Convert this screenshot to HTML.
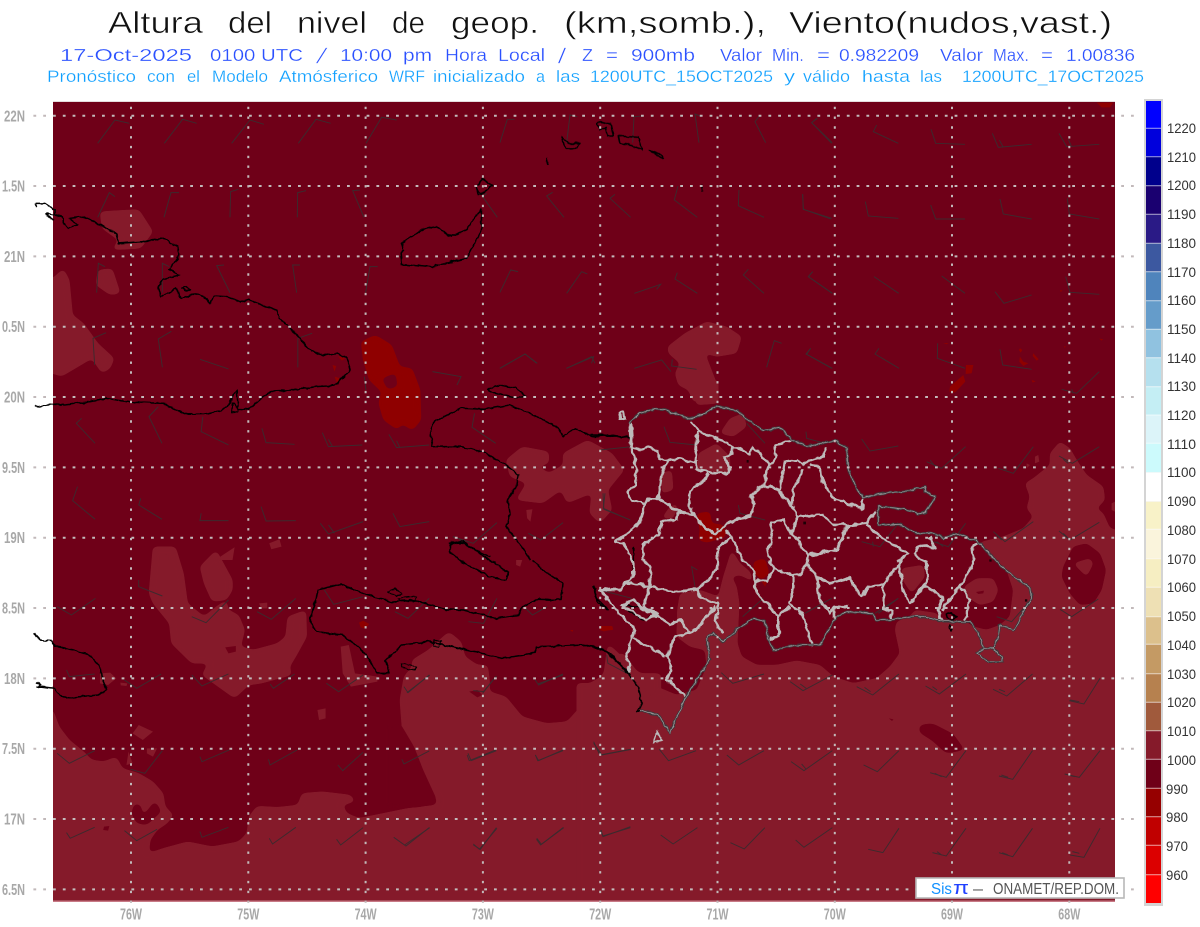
<!DOCTYPE html>
<html><head><meta charset="utf-8"><title>Altura del nivel de geop.</title>
<style>
html,body{margin:0;padding:0;background:#fff}
svg{display:block}
svg path,svg polygon,svg line{vector-effect:non-scaling-stroke}
text{font-family:"Liberation Sans",sans-serif}
.t text{font-size:31px;fill:#111;stroke:#fff;stroke-width:.55px}
.l2 text{font-size:17.5px;fill:#2a50ff;stroke:#fff;stroke-width:.25px}
.l3 text{font-size:16.5px;fill:#10a0ff;stroke:#fff;stroke-width:.25px}
.ax text{font-size:15.5px;fill:#a8a8a8;font-weight:bold}
.cb text{font-size:13.5px;fill:#333}
.L{fill:#851a2a}.D{fill:#6f0018}.R{fill:#8f0000}
.s{filter:url(#g)}
.c{fill:none;stroke:#000;stroke-width:1.5;stroke-linejoin:round}
.w{fill:none;stroke:#3c2a2e;stroke-width:.95}
</style></head><body>
<svg width="1200" height="927" viewBox="0 0 1200 927" xmlns="http://www.w3.org/2000/svg">
<defs>
<filter id="g" x="-20%" y="-20%" width="140%" height="140%" color-interpolation-filters="sRGB">
<feGaussianBlur in="SourceGraphic" stdDeviation="7"/>
<feColorMatrix type="matrix" values="1 0 0 0 0 0 1 0 0 0 0 0 1 0 0 0 0 0 16 -7"/>
</filter>
<filter id="wig" filterUnits="userSpaceOnUse" x="0" y="0" width="1200" height="927" color-interpolation-filters="sRGB">
<feTurbulence type="fractalNoise" baseFrequency=".13" numOctaves="2" seed="4"/>
<feDisplacementMap in="SourceGraphic" scale="6" xChannelSelector="R" yChannelSelector="G"/>
</filter>
<filter id="wig2" filterUnits="userSpaceOnUse" x="0" y="0" width="1200" height="927" color-interpolation-filters="sRGB">
<feTurbulence type="fractalNoise" baseFrequency=".16" numOctaves="2" seed="9"/>
<feDisplacementMap in="SourceGraphic" scale="3.5" xChannelSelector="R" yChannelSelector="G"/>
</filter>
</defs>
<rect width="1200" height="927" fill="#fff"/>

<g class="t">
<text x="108" y="33" textLength="95" lengthAdjust="spacingAndGlyphs">Altura</text>
<text x="228" y="33" textLength="44" lengthAdjust="spacingAndGlyphs">del</text>
<text x="297" y="33" textLength="70" lengthAdjust="spacingAndGlyphs">nivel</text>
<text x="392" y="33" textLength="33" lengthAdjust="spacingAndGlyphs">de</text>
<text x="451" y="33" textLength="88" lengthAdjust="spacingAndGlyphs">geop.</text>
<text x="564" y="33" textLength="202" lengthAdjust="spacingAndGlyphs">(km,somb.),</text>
<text x="789" y="33" textLength="323" lengthAdjust="spacingAndGlyphs">Viento(nudos,vast.)</text>
</g>
<g class="l2">
<text x="60" y="61" textLength="132" lengthAdjust="spacingAndGlyphs">17-Oct-2025</text>
<text x="210" y="61" textLength="93" lengthAdjust="spacingAndGlyphs">0100 UTC</text>
<text transform="translate(316,63) skewX(-20)" style="font-size:21px">/</text>
<text x="340" y="61" textLength="52" lengthAdjust="spacingAndGlyphs">10:00</text>
<text x="403" y="61" textLength="29" lengthAdjust="spacingAndGlyphs">pm</text>
<text x="445" y="61" textLength="42" lengthAdjust="spacingAndGlyphs">Hora</text>
<text x="498" y="61" textLength="47" lengthAdjust="spacingAndGlyphs">Local</text>
<text transform="translate(558,63) skewX(-8)" style="font-size:21px">/</text>
<text x="582" y="61" textLength="11" lengthAdjust="spacingAndGlyphs">Z</text>
<text x="606" y="61" textLength="12" lengthAdjust="spacingAndGlyphs">=</text>
<text x="631" y="61" textLength="64" lengthAdjust="spacingAndGlyphs">900mb</text>
<text x="720" y="61" textLength="42" lengthAdjust="spacingAndGlyphs">Valor</text>
<text x="772" y="61" textLength="32" lengthAdjust="spacingAndGlyphs">Min.</text>
<text x="817" y="61" textLength="13" lengthAdjust="spacingAndGlyphs">=</text>
<text x="839" y="61" textLength="80" lengthAdjust="spacingAndGlyphs">0.982209</text>
<text x="940" y="61" textLength="43" lengthAdjust="spacingAndGlyphs">Valor</text>
<text x="993" y="61" textLength="36" lengthAdjust="spacingAndGlyphs">Max.</text>
<text x="1041" y="61" textLength="12" lengthAdjust="spacingAndGlyphs">=</text>
<text x="1066" y="61" textLength="69" lengthAdjust="spacingAndGlyphs">1.00836</text>
</g>
<g class="l3">
<text x="47" y="82" textLength="89" lengthAdjust="spacingAndGlyphs">Pronóstico</text>
<text x="147" y="82" textLength="28" lengthAdjust="spacingAndGlyphs">con</text>
<text x="187" y="82" textLength="13" lengthAdjust="spacingAndGlyphs">el</text>
<text x="212" y="82" textLength="56" lengthAdjust="spacingAndGlyphs">Modelo</text>
<text x="279" y="82" textLength="99" lengthAdjust="spacingAndGlyphs">Atmósferico</text>
<text x="389" y="82" textLength="36" lengthAdjust="spacingAndGlyphs" style="font-size:17px">WRF</text>
<text x="433" y="82" textLength="92" lengthAdjust="spacingAndGlyphs">inicializado</text>
<text x="536" y="82" textLength="9" lengthAdjust="spacingAndGlyphs">a</text>
<text x="556" y="82" textLength="24" lengthAdjust="spacingAndGlyphs">las</text>
<text x="590" y="82" textLength="183" lengthAdjust="spacingAndGlyphs">1200UTC_15OCT2025</text>
<text x="784" y="82" textLength="11" lengthAdjust="spacingAndGlyphs">y</text>
<text x="803" y="82" textLength="47" lengthAdjust="spacingAndGlyphs">válido</text>
<text x="862" y="82" textLength="48" lengthAdjust="spacingAndGlyphs">hasta</text>
<text x="920" y="82" textLength="22" lengthAdjust="spacingAndGlyphs">las</text>
<text x="962" y="82" textLength="182" lengthAdjust="spacingAndGlyphs">1200UTC_17OCT2025</text>
</g>

<!-- plot -->
<rect x="53" y="101" width="1062" height="1" fill="#e4dcdc"/>
<rect x="53" y="102" width="1062" height="799" class="D"/>

<svg x="53" y="102" width="1062" height="799" viewBox="53 102 1062 799">
<!-- z6 group: SW -->
<g transform="translate(0,560) scale(.408,.3333)">
<path class="L s" d="M60,450 130,450 145,500 170,540 205,575 225,600 255,605 285,590 300,625 340,640 375,665 400,700 405,740 425,765 410,790 385,810 368,840 365,880 400,865 460,845 520,860 585,845 605,820 610,770 630,738 680,742 730,735 740,700 790,695 860,705 870,725 840,735 850,760 880,775 940,760 1000,745 1070,735 1070,715 1040,670 1030,610 990,555 985,500 980,420 990,350 1010,320 1010,300 1050,270 1100,215 1130,245 1140,290 1170,315 1195,315 1200,360 1200,395 1240,410 1280,470 1340,490 1390,485 1430,430 1440,390 1480,340 1490,250 1568,340 1620,340 1620,1100 60,1100Z"/>
<path class="L s" d="M375,-40 430,-40 450,40 460,130 500,170 530,140 555,120 560,150 585,165 600,210 590,260 620,270 680,250 700,230 705,170 750,150 752,230 725,290 710,320 715,345 640,370 610,375 575,415 495,345 510,310 470,310 420,250 415,190 375,130 365,100Z"/>
<path class="L s" d="M490,20 530,-30 570,60 570,90 555,120 520,125 500,70Z"/>
<path class="L" d="M245,340 270,338 285,355 265,375 245,370ZM835,260 855,255 870,340 925,350 925,365 860,380 840,340ZM778,450 798,445 798,475 782,480ZM340,495 375,515 350,540 325,520ZM360,565 385,565 375,590 360,580ZM315,575 325,610 310,615ZM635,130 655,128 655,145 640,145ZM295,368 312,370 310,378 296,376ZM1265,0 1280,0 1275,20 1265,15Z"/>
<path class="D s" d="M330,730 345,735 350,770 380,722 395,755 360,795 335,790 322,760Z"/>
<path class="D" d="M255,800 268,798 265,812 253,810ZM552,262 578,258 578,275 560,280ZM1150,395 1170,390 1182,405 1170,412ZM895,288 905,290 898,302Z"/>
<path class="R" d="M880,188 890,182 905,192 895,206 884,202ZM1470,198 1500,198 1503,208 1480,214 1470,210ZM1397,210 1405,210 1403,216Z"/>
</g>
<!-- z7 group: NW -->
<g transform="translate(0,190) scale(.408,.3333)">
<path class="L s" d="M245,65 340,58 375,125 345,175 275,180 290,150 250,115Z"/>
<path class="L s" d="M240,240 275,235 295,310 270,315 235,285Z"/>
<path class="L s" d="M60,265 130,265 155,235 170,270 178,375 205,400 240,460 280,505 270,535 250,550 225,505 205,520 150,560 130,550 60,550Z"/>
<path class="L s" d="M1240,810 1280,770 1345,785 1345,820 1320,830 1345,850 1380,825 1380,790 1440,750 1500,790 1530,840 1490,900 1500,960 1470,1000 1445,970 1450,910 1390,940 1375,900 1330,940 1265,930 1290,880 1250,860Z"/>
<path class="L" d="M660,1060 685,1048 690,1070 665,1078ZM540,1100 575,1072 570,1110 540,1110ZM390,1100 412,1092 412,1110 390,1110ZM1290,960 1305,958 1300,995 1292,985Z"/>
<path class="R s" fill-rule="evenodd" d="M885,455 920,435 960,465 980,530 1010,535 1030,600 1032,690 1010,722 985,700 975,720 940,690 928,640 935,605 905,570 890,510ZM935,565 970,548 975,590 950,600Z"/>
<path class="R" d="M828,498 846,505 838,512ZM815,525 824,528 820,545ZM820,560 834,565 828,585Z"/>
</g>
<!-- z4 group: DR light and dark -->
<g transform="translate(590,390) scale(.3333)">
<path class="L s" d="M-40,880 0,880 50,850 50,800 100,790 130,830 170,880 175,925 200,890 260,915 320,900 350,830 345,780 300,770 260,740 262,660 270,610 330,600 385,620 400,560 425,480 450,520 480,545 490,575 450,555 425,560 440,590 448,640 445,700 442,760 455,800 500,825 560,825 620,812 690,825 730,860 790,880 860,865 900,830 930,790 915,720 920,695 960,680 975,660 1040,670 1060,695 1120,690 1150,710 1190,720 1230,705 1260,680 1270,600 1250,540 1200,490 1165,458 1240,440 1300,415 1330,380 1310,355 1320,320 1305,280 1330,265 1380,225 1380,190 1410,155 1440,175 1460,210 1490,255 1540,290 1545,330 1520,355 1540,370 1560,415 1600,425 1640,425 1640,1600 -40,1600Z"/>
<path class="L s" d="M390,130 420,85 460,70 470,110 430,140Z"/>
<path class="L s" d="M325,190 380,160 420,200 420,250 370,245 320,240Z"/>
<path class="L s" d="M215,250 245,240 250,300 215,310Z"/>
<path class="L s" d="M240,350 265,340 250,385 215,385Z"/>
<path class="L" d="M1335,200 1345,195 1348,215 1335,220ZM1310,220 1320,225 1310,235Z"/>
<path class="L s" d="M935,535 1000,525 1005,560 965,610 935,565Z"/>
<path class="L s" d="M1122,590 1160,565 1210,565 1225,600 1210,635 1170,645 1130,620Z"/>
<path class="L s" d="M300,-30 385,-30 385,40 320,45Z"/>
<path class="L" d="M1565,340 1575,335 1575,365 1565,360Z" />
<path class="D s" d="M1420,530 1450,470 1490,460 1530,490 1548,540 1535,600 1510,640 1470,645 1440,610 1415,560Z"/>
<path class="L s" d="M1450,520 1500,505 1510,520 1490,560 1460,530Z"/>
<path class="D" d="M1158,606 1182,602 1180,610 1165,612Z"/>
<path class="R s" d="M320,370 360,365 365,400 400,405 410,440 350,458 325,450 330,420Z"/>
<path class="R s" d="M490,515 525,505 538,550 515,570 492,548Z"/>
<path class="R" d="M35,710 68,710 68,720 35,722ZM515,575 532,575 525,590Z"/>
<path fill="#1c0006" d="M640,395h8v8h-8ZM470,210h6v8h-6ZM1198,508h7v7h-7ZM1305,628h7v7h-7Z"/>
</g>
<g transform="translate(440,100) scale(.3333)">
<path class="L s" d="M683,740 735,700 800,665 860,680 905,710 890,760 830,770 795,760 830,850 838,905 760,905 745,870 715,855 705,820 720,790 685,760Z"/>
</g>
<g transform="translate(400,660) scale(.459,.3333)">
<path class="D s" d="M1132,195 1160,190 1205,222 1230,270 1190,280 1160,242 1132,218Z"/>
<path class="D s" d="M-30,190 0,190 30,260 50,330 80,420 50,440 0,445 -30,445Z"/>
<path class="D" d="M1065,175 1075,178 1072,183Z"/>
</g>
<g transform="translate(800,100) scale(.3333)">
<path class="R" d="M890,8 940,8 930,22 905,22ZM498,795 520,795 515,820 497,822ZM450,860 490,825 496,845 465,878 448,875ZM660,745 667,750 662,758 657,750ZM660,770 670,785 685,790 670,798 658,785ZM700,760 716,778 710,782 698,768ZM695,840 707,844 698,848ZM780,570 788,572 782,576ZM430,730 446,729 440,733ZM792,738 798,740 794,744ZM898,716 910,718 904,722Z"/>
</g>

<!-- wind barbs -->
<g class="w">
<path transform="scale(.3333)" d="M293 430 345 360 388 370M493 430 548 358 590 370M695 430 750 360 792 373M895 430 948 358 992 370M1098 430 1145 352 1190 360M293 652 328 578 345 590M492 652 513 578 537 578M690 652 692 575 715 568M892 652 893 578 918 572M1092 652 1058 572 1080 570M290 878 295 790 315 800M487 878 487 790 508 800M690 878 650 797 672 795M890 878 878 795 900 795M1097 878 1110 800 1133 800"/>
<path transform="translate(440,100) scale(.3333)" d="M180 128 202 58 224 58M380 128 390 45 412 50M578 128 582 50 605 48M777 128 765 42 780 48M977 128 945 65 958 48M1177 128 1115 68 1130 55M172 352 128 290 140 280M372 352 320 288 338 277M572 352 510 295 525 283M772 352 703 300 714 258M972 352 895 317 897 270M1172 357 1090 328 1088 282M180 577 212 510 234 515M380 580 425 515 442 522M583 580 662 553 650 568M772 580 705 537 712 518M972 580 910 525 925 508M1177 580 1105 530 1118 515M180 805 255 762 292 790M380 805 455 770 465 790M583 805 665 780 693 815M770 808 695 798 697 778M980 802 1003 722 1025 730M1175 805 1100 763 1112 745"/>
<path transform="translate(800,100) scale(.3333)" d="M95 130 35 68 52 55M295 130 220 95 230 75M495 133 407 130 393 88M695 133 595 142 577 100M610 142 598 120M898 133 800 140 777 100M815 140 805 118M95 355 10 328 8 283M295 355 205 348 196 305M495 357 407 357 392 315M695 357 610 342 600 297M898 357 808 342 802 295M97 580 25 530 38 515M296 580 222 530M495 580 425 528M695 585 612 610 585 575M898 583 810 577 797 530M97 805 18 762 32 745M297 805 225 762 237 745M495 805 412 775 413 730M695 808 608 795 600 748M898 815 830 880 785 868M820 880 815 868"/>
<path transform="translate(0,190) scale(.408,.3333)" d="M232 525 228 445 260 428M398 532 388 447 420 424M560 537 490 508M730 532 730 445 765 430M233 760 187 700 200 685M397 760 365 680 388 650M560 765 493 725 497 680M722 763 652 758 642 715M888 765 805 770 790 728M815 770 805 748M1052 765 972 773 953 733M980 773 972 752M1215 760 1157 712 1163 670M1470 780 1550 770M233 988 178 932 190 890M397 988 340 945 345 925M560 992 490 992 493 970M725 992 652 993 640 950M890 995 805 1032 785 1000M820 1030 805 1005M1052 995 980 1010 963 970M1218 998 1160 1060 1110 1040M1140 1060 1125 1048M1380 998 1325 1050 1295 1030M1545 990 1480 958 1478 910M893 560 897 600M1060 545 1130 560 1120 585M1225 535 1287 492 1315 520M1388 535 1455 500 1450 520"/>
<path transform="translate(590,390) scale(.3333)" d="M320 165 240 157 222 110M525 160 470 100M705 160 650 145 648 125M925 168 840 183 815 147M1127 170 1055 235 1010 215M1040 235 1020 210M1330 170 1270 250 1225 235M1250 240 1240 230M120 390 40 355 45 310M525 390 450 370 445 345M925 400 870 470 815 455M850 470 848 455M1127 400 1075 470 1030 455M1060 470 1040 455M1330 395 1245 455 1210 425M1235 450 1220 435M315 590 305 530 322 540M125 625 30 600M520 625 458 680M725 625 645 670M925 625 865 670"/>
<path transform="translate(860,400) scale(.3333)" d="M718 140 637 190 597 168M625 190 610 178M718 367 630 420 597 393M625 415 610 400M715 597 635 650 600 628M515 597 455 665 410 650M115 595 45 640"/>
<path transform="translate(0,560) scale(.408,.3333)" d="M234 115 175 165 140 140M398 108 340 80 340 60M560 120 505 188 470 170M725 115 665 178 630 155M890 110 818 133 795 90M1052 115 1000 175 968 155M1218 115 1185 190 1148 185M1340 140 1305 165 1288 145M232 342 170 350 163 330M395 342 335 385 305 360M560 342 495 378 470 345M722 342 670 385 662 372M890 345 830 395 800 370M1052 345 1000 398 990 380M1215 350 1185 395 1160 392M1380 342 1320 375 1312 360M1545 345 1490 310 1487 285M232 572 170 610 140 580M398 572 355 640 320 628M562 570 495 605 490 590M728 570 662 615 658 598M890 577 840 632 828 615M1052 573 990 612 985 598M1215 570 1150 602 1145 585M1380 570 1320 602 1312 585M1545 568 1470 585 1455 545M232 802 172 835 163 818M385 808 335 842 305 812M560 802 495 832 490 815M725 802 668 852 660 835M890 803 835 855 825 838M1052 803 995 858 965 832M1218 805 1175 868 1160 852M1380 803 1325 855 1315 838M1545 800 1478 830 1472 812"/>
<path transform="translate(400,660) scale(.459,.3333)" d="M210 272 155 302 148 280M355 272 300 302 295 285M505 268 440 285 422 250M645 272 585 302 565 268M793 272 738 315 712 285M942 272 880 332 852 305M885 328 875 312M1087 272 1040 335 1010 315M1233 272 1190 352 1155 338M1180 350 1165 340M1378 272 1335 358 1305 348M1325 352 1310 345M1525 272 1480 352 1448 342M1470 350 1455 345M65 503 10 555M210 503 175 568 160 555M357 503 308 553 298 535M502 503 442 528 438 510M648 503 595 552 568 525M795 503 750 567 720 548M942 503 880 562 862 540M1087 505 1052 578 1020 568M1233 505 1190 588 1160 578M1180 585 1170 575M1378 505 1335 590 1305 578M1325 585 1312 578M1525 505 1490 592 1460 585M1480 580 1465 575M65 45 15 98M210 48 180 100M355 45 300 72M793 42 725 70 700 38M942 45 878 92 850 65M885 85 872 72M1087 42 1030 105 995 80M1025 95 1012 82M1233 42 1175 102 1145 78M1170 90 1160 80M1378 42 1322 108 1292 88M1318 95 1305 88M1525 55 1490 132 1458 122M1480 125 1460 120"/>
</g>
</svg>
<rect x="53" y="900.5" width="1062" height="1.5" fill="#c87a86"/>

<!-- coastlines -->
<g filter="url(#wig2)">
<g transform="translate(0,190) scale(.408,.3333)">
<path class="c" d="M85,650 130,643 160,645 215,635 260,625 320,637 400,640 430,660 460,673 510,672 545,660 565,640 568,620 580,600 585,665 568,668 570,640 585,655 610,658 640,625 665,603 720,600 775,590 820,587 858,540 850,505 825,490 790,497 760,480 735,445 700,400 683,385 680,362 640,345 610,328 590,335 555,320 525,318 515,340 500,320 480,310 445,325 430,295 395,322 388,290 398,268 440,255 415,240 440,195 435,170 400,145 350,155 290,160 285,130 230,95 205,80 170,85 190,105 165,115 155,100 155,82 135,75 112,70 130,92"/>
<path class="c" d="M85,40 90,50M85,40 110,40 135,60 135,75M455,290 468,298 458,303 445,295Z"/>
<path class="c" d="M985,160 1035,118 1070,110 1105,140 1145,118 1165,80 1180,60 1180,120 1145,205 1060,230 985,222 982,190 990,180ZM1170,0 1180,15 1192,0M1195,598 1225,585 1265,595 1290,620 1255,622 1210,608Z"/>
<path class="c" d="M1100,1060 1130,1058 1200,1100M1055,730 1065,695 1130,655 1185,658 1250,645 1290,665 1340,695 1370,715 1380,740 1410,715 1450,740 1500,735 1550,745M1055,730 1060,770 1130,770 1185,785 1240,825 1270,855 1265,890 1245,930 1250,970 1240,1010 1280,1070 1300,1110"/>
</g>
<g transform="translate(0,560) scale(.408,.3333)">
<path class="c" d="M1305,0 1330,30 1380,70 1375,120 1320,118 1280,140 1270,165 1215,175 1135,150 1090,148 1010,120 960,125 890,100 835,72 780,90 760,180 775,215 840,225 895,280 925,340 955,340 945,300 985,255 1050,245 1100,258 1230,295 1310,280 1315,260 1440,255 1480,270 1530,325 1545,345"/>
<path class="c" d="M85,218 97,240 125,243 135,258 180,270 220,285 245,320 250,355 262,390 240,405 215,408 175,413 150,408 135,385 100,380 90,382 102,375 88,367"/>
<path class="c" style="stroke-width:1" d="M950,95 970,85 985,100 970,108ZM975,115 1020,108 1015,122 985,125ZM982,310 1020,320 1015,330 985,322ZM1065,240 1080,245 1075,262 1062,258Z"/>
</g>
<path class="c" d="M450,545 462,541 490,560 508,572 506,580 490,577 462,562 450,552Z"/>
<g transform="translate(440,100) scale(.3333)">
<path class="c" d="M365,108 385,130 420,130 410,145 375,145ZM472,75 480,65 512,72 520,108 502,108 497,85 480,90ZM535,108 595,112 607,150 575,135 540,130ZM628,152 665,165 672,178ZM320,175 325,195M785,255 788,275M108,258 128,237 158,257 115,287Z"/>
</g>
<g transform="translate(590,390) scale(.3333)">
<path class="c" d="M0,765 60,790 110,845 145,890 155,940 140,965 150,960 205,975 240,1030M115,140 75,140 40,135 0,135M130,470 130,560M10,590 25,640 55,660 20,625ZM100,645 160,655 200,670 165,690 110,660Z"/>
<path fill="none" stroke="#000" stroke-width="1.5" d="M1068,672 1085,668 1098,680 1088,692 1072,685ZM1080,705 1088,712 1084,722 1076,712Z"/>
</g>
</g>

<!-- Dominican Republic -->
<g filter="url(#wig)">
<g transform="translate(590,390) scale(.3333)">
<path fill="none" stroke="#bdb9b9" stroke-width="2.6" stroke-linejoin="round" d="M120,100 125,170 140,240 135,285 110,305 125,330 160,345 155,390 115,430 75,455 100,460 130,520 130,560 105,578 90,600 30,600 70,650 135,720 110,790 120,845M30,600 60,595M120,170 160,180 175,170 200,185 210,205 235,210 270,205 315,220 325,125M300,95 330,125 390,150 430,170 480,190 485,170 510,190 540,225M320,210 320,240 355,245 415,250 420,230 405,205 425,190 428,165M235,210 215,250 205,325 175,325 160,345M205,325 265,365 310,375 340,410 375,435 410,400 480,375 495,340 480,320 520,285 530,240 555,200 555,165 605,155M355,250 345,270 300,300 295,340 310,375M265,365 260,390 215,395 205,435 160,465 160,510 180,535 180,590M105,578 180,590 245,605 320,600 360,565 385,530 385,470 425,440 410,420M425,440 460,515 490,540 495,575 500,610 530,640 565,680 565,740 535,745M495,570 530,575 550,535 610,555 610,590 600,640 640,680 665,765M565,680 600,650M610,555 630,555 650,525 680,560 720,580 780,565 810,620 840,590 880,585 925,520 955,490 875,445 830,405M550,535 530,490 550,430 545,395 580,390 605,430 620,380 700,375 730,405 775,405 830,400 860,360M605,430 655,495 650,525M655,495 740,480 760,440 775,405M520,285 565,300 570,305 585,215 620,210 640,225 660,210 700,200 705,175M660,225 685,228 705,290 730,325 815,355 820,325M640,240 610,300 605,350 620,380M570,305 605,350M680,560 690,630 720,670 735,650 775,650M735,650 735,680M880,585 880,655 905,665 905,690M925,520 940,600 960,640 985,610 1012,570 1010,520 975,490 985,465 1035,475 1020,440M985,610 1005,590 1060,620 1045,660 1055,695M1055,660 1110,590 1140,630 1125,690M1110,590 1150,520 1145,470 1165,458M320,600 335,625 385,640 375,690 400,730M375,650 320,720 295,730 250,740 235,800 245,830 230,870 285,920M180,590 160,650M130,745 230,800M160,650 240,705 270,690 300,725M95,645 130,630 160,660 200,670 165,690ZM88,68 100,65 104,85 92,88Z"/>
</g>
</g>
<g filter="url(#wig2)">
<g transform="translate(590,390) scale(.3333)">
<path id="drc" fill="none" stroke="#3e383c" stroke-width="2.6" stroke-linejoin="round" d="M118,100 150,70 190,57 225,60 260,72 300,88 345,70 380,48 440,62 480,95 520,122 570,112 605,150 650,168 705,158 735,152 770,175 775,240 800,295 820,322 880,310 960,302 1005,290 1005,305 1035,320 1010,365 985,372 960,360 865,348 865,405 930,403 980,430 1030,430 1060,445 1100,430 1165,455 1240,535 1320,595 1325,625 1300,665 1280,710 1270,720 1230,705 1225,740 1210,775 1180,775 1162,790 1195,815 1238,815 1235,800 1210,775M1180,775 1165,730 1140,695 1060,695 1000,680 960,680 900,690 860,690 845,670 770,665 740,680 690,765 620,765 550,780 535,745 525,695 490,685 440,720 400,755 370,730 350,745 360,810 320,870 285,925 240,1030 205,975 150,960"/>
<path fill="none" stroke="#9a9698" stroke-width=".8" stroke-linejoin="round" d="M118,100 150,70 190,57 225,60 260,72 300,88 345,70 380,48 440,62 480,95 520,122 570,112 605,150 650,168 705,158 735,152 770,175 775,240 800,295 820,322 880,310 960,302 1005,290 1005,305 1035,320 1010,365 985,372 960,360 865,348 865,405 930,403 980,430 1030,430 1060,445 1100,430 1165,455 1240,535 1320,595 1325,625 1300,665 1280,710 1270,720 1230,705 1225,740 1210,775 1180,775 1162,790 1195,815 1238,815 1235,800 1210,775M1180,775 1165,730 1140,695 1060,695 1000,680 960,680 900,690 860,690 845,670 770,665 740,680 690,765 620,765 550,780 535,745 525,695 490,685 440,720 400,755 370,730 350,745 360,810 320,870 285,925 240,1030 205,975 150,960"/>
<path fill="none" stroke="#bbb" stroke-width="1.5" d="M200,1025 215,1050 190,1058Z"/>
</g>
</g>

<!-- grid -->
<g stroke="#c2b9ba" fill="none">
<path stroke-width="2" stroke-dasharray="2.8 7" d="M33.4,115.7H1135M33.4,186H1135M33.4,256.4H1135M33.4,326.7H1135M33.4,397H1135M33.4,467.4H1135M33.4,537.7H1135M33.4,608H1135M33.4,678.4H1135M33.4,748.7H1135M33.4,819H1135M33.4,889.4H1135"/>
<path stroke-width="2" stroke-dasharray="2.4 7.4" d="M131,106.7V906M248.3,106.7V906M365.6,106.7V906M482.9,106.7V906M600.2,106.7V906M717.5,106.7V906M834.8,106.7V906M952,106.7V906M1069.3,106.7V906"/>
</g>

<g class="ax" text-anchor="end">
<text x="25" y="121.5" textLength="21" lengthAdjust="spacingAndGlyphs">22N</text>
<text x="25" y="191.5" textLength="23" lengthAdjust="spacingAndGlyphs">1.5N</text>
<text x="25" y="262" textLength="21" lengthAdjust="spacingAndGlyphs">21N</text>
<text x="25" y="332" textLength="23" lengthAdjust="spacingAndGlyphs">0.5N</text>
<text x="25" y="402.5" textLength="21" lengthAdjust="spacingAndGlyphs">20N</text>
<text x="25" y="473" textLength="23" lengthAdjust="spacingAndGlyphs">9.5N</text>
<text x="25" y="543" textLength="21" lengthAdjust="spacingAndGlyphs">19N</text>
<text x="25" y="613.5" textLength="23" lengthAdjust="spacingAndGlyphs">8.5N</text>
<text x="25" y="684" textLength="21" lengthAdjust="spacingAndGlyphs">18N</text>
<text x="25" y="754" textLength="23" lengthAdjust="spacingAndGlyphs">7.5N</text>
<text x="25" y="824.5" textLength="21" lengthAdjust="spacingAndGlyphs">17N</text>
<text x="25" y="895" textLength="23" lengthAdjust="spacingAndGlyphs">6.5N</text>
</g>
<g class="ax" text-anchor="middle">
<text x="131" y="919.5" textLength="22" lengthAdjust="spacingAndGlyphs">76W</text>
<text x="248.3" y="919.5" textLength="22" lengthAdjust="spacingAndGlyphs">75W</text>
<text x="365.6" y="919.5" textLength="22" lengthAdjust="spacingAndGlyphs">74W</text>
<text x="482.9" y="919.5" textLength="22" lengthAdjust="spacingAndGlyphs">73W</text>
<text x="600.2" y="919.5" textLength="22" lengthAdjust="spacingAndGlyphs">72W</text>
<text x="717.5" y="919.5" textLength="22" lengthAdjust="spacingAndGlyphs">71W</text>
<text x="834.8" y="919.5" textLength="22" lengthAdjust="spacingAndGlyphs">70W</text>
<text x="952" y="919.5" textLength="22" lengthAdjust="spacingAndGlyphs">69W</text>
<text x="1069.3" y="919.5" textLength="22" lengthAdjust="spacingAndGlyphs">68W</text>
</g>

<!-- colour bar -->
<g>
<rect x="1144" y="99" width="19" height="807" fill="#d4d4d4"/>
<rect x="1146" y="101" width="15" height="27.3" fill="#0000ff"/>
<rect x="1146" y="128.3" width="15" height="28.4" fill="#0000dc"/>
<rect x="1146" y="156.7" width="15" height="29" fill="#00008c"/>
<rect x="1146" y="185.7" width="15" height="28.6" fill="#1a0070"/>
<rect x="1146" y="214.3" width="15" height="29" fill="#2a1a86"/>
<rect x="1146" y="243.3" width="15" height="28.4" fill="#3c58a0"/>
<rect x="1146" y="271.7" width="15" height="29" fill="#4f84bc"/>
<rect x="1146" y="300.7" width="15" height="28.6" fill="#659cca"/>
<rect x="1146" y="329.3" width="15" height="28.4" fill="#90c2e0"/>
<rect x="1146" y="357.7" width="15" height="29" fill="#b5e0ee"/>
<rect x="1146" y="386.7" width="15" height="28.3" fill="#c4eef4"/>
<rect x="1146" y="415" width="15" height="28.3" fill="#dcf4f9"/>
<rect x="1146" y="443.3" width="15" height="29" fill="#ccfafc"/>
<rect x="1146" y="472.3" width="15" height="29.4" fill="#ffffff"/>
<rect x="1146" y="501.7" width="15" height="27.6" fill="#f8f2c8"/>
<rect x="1146" y="529.3" width="15" height="29.4" fill="#faf4dc"/>
<rect x="1146" y="558.7" width="15" height="28.6" fill="#f6eec2"/>
<rect x="1146" y="587.3" width="15" height="29.4" fill="#eee0b4"/>
<rect x="1146" y="616.7" width="15" height="27.6" fill="#dcc08c"/>
<rect x="1146" y="644.3" width="15" height="29.4" fill="#c49a64"/>
<rect x="1146" y="673.7" width="15" height="28.6" fill="#b6814f"/>
<rect x="1146" y="702.3" width="15" height="28.4" fill="#a05a3c"/>
<rect x="1146" y="730.7" width="15" height="28.6" fill="#851a2a"/>
<rect x="1146" y="759.3" width="15" height="29" fill="#6f0018"/>
<rect x="1146" y="788.3" width="15" height="28.4" fill="#960000"/>
<rect x="1146" y="816.7" width="15" height="28.6" fill="#c00000"/>
<rect x="1146" y="845.3" width="15" height="29.4" fill="#dc0000"/>
<rect x="1146" y="874.7" width="15" height="28.3" fill="#ff0000"/>
</g>
<g stroke="#fff" stroke-opacity=".6" stroke-width="1">
<path d="M1146,128.3h15M1146,156.7h15M1146,185.7h15M1146,214.3h15M1146,243.3h15M1146,271.7h15M1146,300.7h15M1146,329.3h15M1146,357.7h15M1146,386.7h15M1146,415h15M1146,443.3h15M1146,529.3h15M1146,558.7h15M1146,587.3h15M1146,616.7h15M1146,644.3h15M1146,673.7h15M1146,702.3h15M1146,730.7h15M1146,759.3h15M1146,788.3h15M1146,816.7h15M1146,845.3h15M1146,874.7h15"/>
</g>
<g class="cb">
<text x="1167" y="133" textLength="29" lengthAdjust="spacingAndGlyphs">1220</text>
<text x="1167" y="162" textLength="29" lengthAdjust="spacingAndGlyphs">1210</text>
<text x="1167" y="190" textLength="29" lengthAdjust="spacingAndGlyphs">1200</text>
<text x="1167" y="219" textLength="29" lengthAdjust="spacingAndGlyphs">1190</text>
<text x="1167" y="248" textLength="29" lengthAdjust="spacingAndGlyphs">1180</text>
<text x="1167" y="277" textLength="29" lengthAdjust="spacingAndGlyphs">1170</text>
<text x="1167" y="305" textLength="29" lengthAdjust="spacingAndGlyphs">1160</text>
<text x="1167" y="334" textLength="29" lengthAdjust="spacingAndGlyphs">1150</text>
<text x="1167" y="363" textLength="29" lengthAdjust="spacingAndGlyphs">1140</text>
<text x="1167" y="391" textLength="29" lengthAdjust="spacingAndGlyphs">1130</text>
<text x="1167" y="420" textLength="29" lengthAdjust="spacingAndGlyphs">1120</text>
<text x="1167" y="449" textLength="29" lengthAdjust="spacingAndGlyphs">1110</text>
<text x="1167" y="477" textLength="29" lengthAdjust="spacingAndGlyphs">1100</text>
<text x="1167" y="506" textLength="29" lengthAdjust="spacingAndGlyphs">1090</text>
<text x="1167" y="535" textLength="29" lengthAdjust="spacingAndGlyphs">1080</text>
<text x="1167" y="564" textLength="29" lengthAdjust="spacingAndGlyphs">1070</text>
<text x="1167" y="592" textLength="29" lengthAdjust="spacingAndGlyphs">1060</text>
<text x="1167" y="621" textLength="29" lengthAdjust="spacingAndGlyphs">1050</text>
<text x="1167" y="650" textLength="29" lengthAdjust="spacingAndGlyphs">1040</text>
<text x="1167" y="679" textLength="29" lengthAdjust="spacingAndGlyphs">1030</text>
<text x="1167" y="707" textLength="29" lengthAdjust="spacingAndGlyphs">1020</text>
<text x="1167" y="736" textLength="29" lengthAdjust="spacingAndGlyphs">1010</text>
<text x="1167" y="765" textLength="29" lengthAdjust="spacingAndGlyphs">1000</text>
<text x="1166" y="794" textLength="22" lengthAdjust="spacingAndGlyphs">990</text>
<text x="1166" y="822" textLength="22" lengthAdjust="spacingAndGlyphs">980</text>
<text x="1166" y="851" textLength="22" lengthAdjust="spacingAndGlyphs">970</text>
<text x="1166" y="880" textLength="22" lengthAdjust="spacingAndGlyphs">960</text>
</g>

<!-- credit -->
<rect x="916" y="878" width="208" height="20" fill="#fff" stroke="#b8b8b8" stroke-width="1.6"/>
<text x="931" y="894" font-size="16" fill="#1090ff" textLength="21" lengthAdjust="spacingAndGlyphs">Sis</text>
<text x="953" y="894" font-size="18" fill="#2040ff" textLength="16" lengthAdjust="spacingAndGlyphs">π</text>
<text x="973" y="894" font-size="16" fill="#555" textLength="10" lengthAdjust="spacingAndGlyphs">–</text>
<text x="993" y="894" font-size="15.5" fill="#555" textLength="126" lengthAdjust="spacingAndGlyphs">ONAMET/REP.DOM.</text>
</svg>
</body></html>
